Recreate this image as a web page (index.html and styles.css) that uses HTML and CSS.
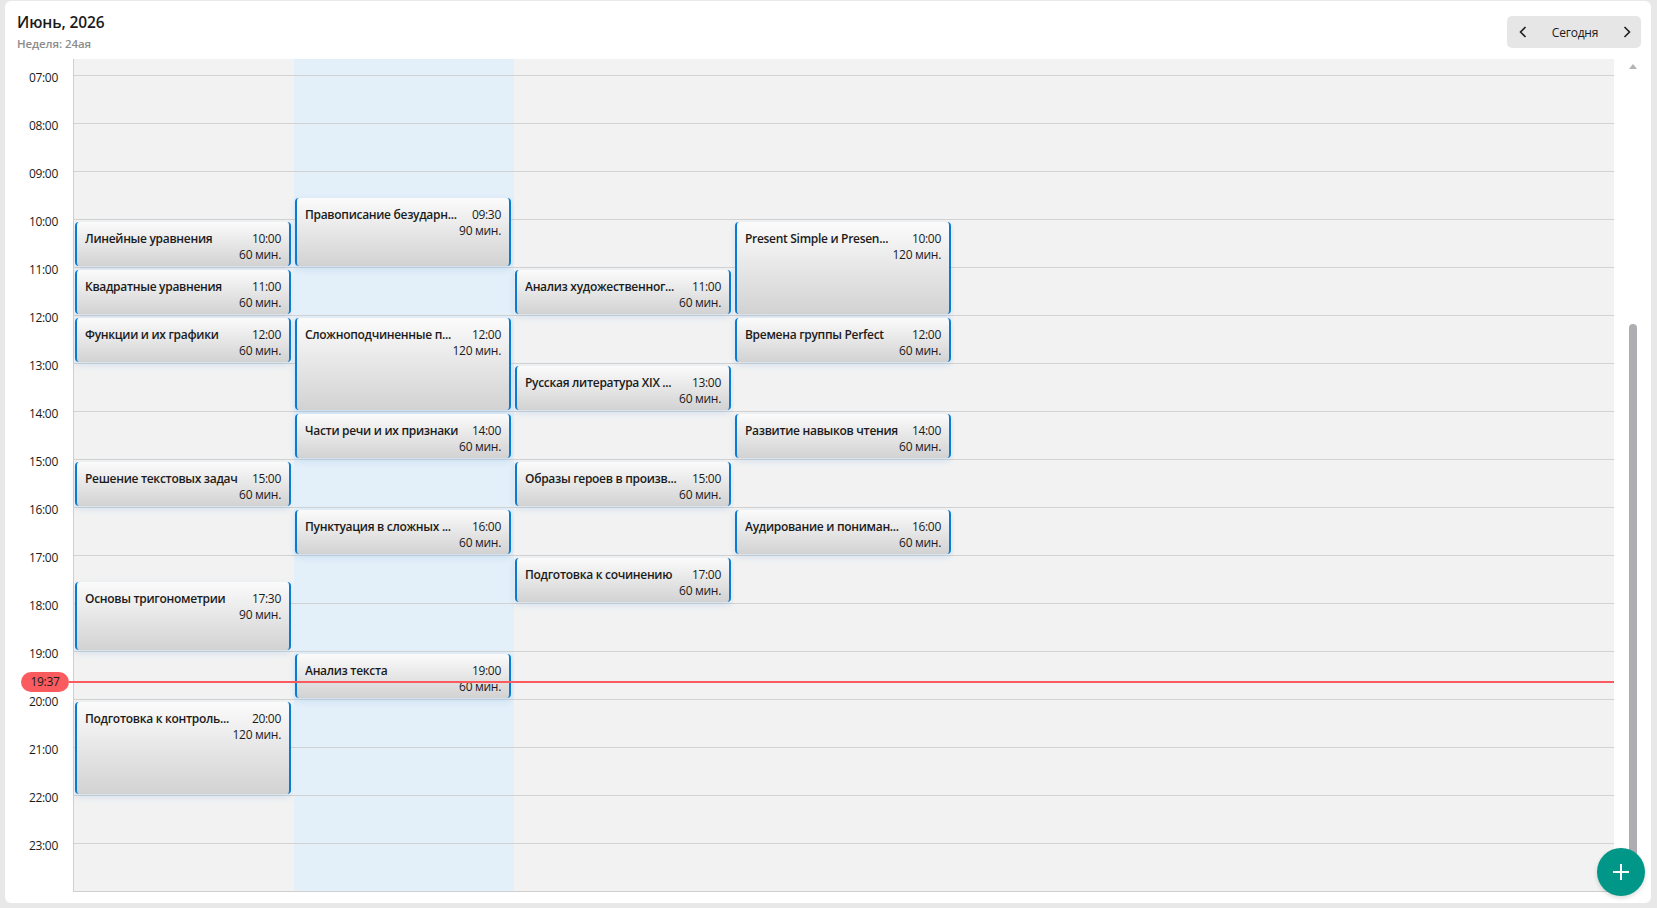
FILE: index.html
```html
<!DOCTYPE html>
<html lang="ru">
<head>
<meta charset="utf-8">
<title>Календарь</title>
<link rel="stylesheet" href="styles.css">
</head>
<body>
<div class="card">
  <header class="header">
    <div class="heading">
      <div class="title">Июнь, 2026</div>
      <div class="subtitle">Неделя: 24ая</div>
    </div>
    <div class="nav">
      <button class="nav-btn" aria-label="Назад"><svg width="10" height="14" viewBox="0 0 10 14"><path d="M7.5 2 L2.5 7 L7.5 12" fill="none" stroke="#1f1f1f" stroke-width="1.6"/></svg></button>
      <span class="nav-label">Сегодня</span>
      <button class="nav-btn" aria-label="Вперёд"><svg width="10" height="14" viewBox="0 0 10 14"><path d="M2.5 2 L7.5 7 L2.5 12" fill="none" stroke="#1f1f1f" stroke-width="1.6"/></svg></button>
    </div>
  </header>

  <div class="body">
    <div class="viewport">
      <div class="content">
        <div class="gutter">
          <div class="hl">07:00</div><div class="hl">08:00</div><div class="hl">09:00</div><div class="hl">10:00</div>
          <div class="hl">11:00</div><div class="hl">12:00</div><div class="hl">13:00</div><div class="hl">14:00</div>
          <div class="hl">15:00</div><div class="hl">16:00</div><div class="hl">17:00</div><div class="hl">18:00</div>
          <div class="hl">19:00</div><div class="hl">20:00</div><div class="hl">21:00</div><div class="hl">22:00</div>
          <div class="hl">23:00</div>
        </div>
        <div class="days">
          <div class="day">
            <div class="event" style="top:482.5px;height:44px"><div class="ev-row"><span class="ev-title">Линейные уравнения</span><span class="ev-time">10:00</span></div><div class="ev-dur">60 мин.</div></div>
            <div class="event" style="top:530.5px;height:44px"><div class="ev-row"><span class="ev-title">Квадратные уравнения</span><span class="ev-time">11:00</span></div><div class="ev-dur">60 мин.</div></div>
            <div class="event" style="top:578.5px;height:44px"><div class="ev-row"><span class="ev-title">Функции и их графики</span><span class="ev-time">12:00</span></div><div class="ev-dur">60 мин.</div></div>
            <div class="event" style="top:722.5px;height:44px"><div class="ev-row"><span class="ev-title">Решение текстовых задач</span><span class="ev-time">15:00</span></div><div class="ev-dur">60 мин.</div></div>
            <div class="event" style="top:842.5px;height:68px"><div class="ev-row"><span class="ev-title">Основы тригонометрии</span><span class="ev-time">17:30</span></div><div class="ev-dur">90 мин.</div></div>
            <div class="event" style="top:962.5px;height:92px"><div class="ev-row"><span class="ev-title">Подготовка к контроль...</span><span class="ev-time">20:00</span></div><div class="ev-dur">120 мин.</div></div>
          </div>
          <div class="day today">
            <div class="event" style="top:458.5px;height:68px"><div class="ev-row"><span class="ev-title">Правописание безударн...</span><span class="ev-time">09:30</span></div><div class="ev-dur">90 мин.</div></div>
            <div class="event" style="top:578.5px;height:92px"><div class="ev-row"><span class="ev-title">Сложноподчиненные п...</span><span class="ev-time">12:00</span></div><div class="ev-dur">120 мин.</div></div>
            <div class="event" style="top:674.5px;height:44px"><div class="ev-row"><span class="ev-title">Части речи и их признаки</span><span class="ev-time">14:00</span></div><div class="ev-dur">60 мин.</div></div>
            <div class="event" style="top:770.5px;height:44px"><div class="ev-row"><span class="ev-title">Пунктуация в сложных ...</span><span class="ev-time">16:00</span></div><div class="ev-dur">60 мин.</div></div>
            <div class="event" style="top:914.5px;height:44px"><div class="ev-row"><span class="ev-title">Анализ текста</span><span class="ev-time">19:00</span></div><div class="ev-dur">60 мин.</div></div>
          </div>
          <div class="day">
            <div class="event" style="top:530.5px;height:44px"><div class="ev-row"><span class="ev-title">Анализ художественног...</span><span class="ev-time">11:00</span></div><div class="ev-dur">60 мин.</div></div>
            <div class="event" style="top:626.5px;height:44px"><div class="ev-row"><span class="ev-title">Русская литература XIX ...</span><span class="ev-time">13:00</span></div><div class="ev-dur">60 мин.</div></div>
            <div class="event" style="top:722.5px;height:44px"><div class="ev-row"><span class="ev-title">Образы героев в произв...</span><span class="ev-time">15:00</span></div><div class="ev-dur">60 мин.</div></div>
            <div class="event" style="top:818.5px;height:44px"><div class="ev-row"><span class="ev-title">Подготовка к сочинению</span><span class="ev-time">17:00</span></div><div class="ev-dur">60 мин.</div></div>
          </div>
          <div class="day">
            <div class="event" style="top:482.5px;height:92px"><div class="ev-row"><span class="ev-title">Present Simple и Presen...</span><span class="ev-time">10:00</span></div><div class="ev-dur">120 мин.</div></div>
            <div class="event" style="top:578.5px;height:44px"><div class="ev-row"><span class="ev-title">Времена группы Perfect</span><span class="ev-time">12:00</span></div><div class="ev-dur">60 мин.</div></div>
            <div class="event" style="top:674.5px;height:44px"><div class="ev-row"><span class="ev-title">Развитие навыков чтения</span><span class="ev-time">14:00</span></div><div class="ev-dur">60 мин.</div></div>
            <div class="event" style="top:770.5px;height:44px"><div class="ev-row"><span class="ev-title">Аудирование и пониман...</span><span class="ev-time">16:00</span></div><div class="ev-dur">60 мин.</div></div>
          </div>
          <div class="day"></div>
          <div class="day"></div>
          <div class="day"></div>
        </div>
        <div class="now" style="top:943px">
          <span class="now-pill">19:37</span>
          <span class="now-line"></span>
        </div>
      </div>
    </div>
    <div class="scrollbar">
      <span class="sb-arrow"></span>
      <span class="sb-thumb"></span>
    </div>
  </div>

  <button class="fab" aria-label="Добавить"><svg width="20" height="20" viewBox="0 0 20 20"><path d="M10 2 V18 M2 10 H18" stroke="#fff" stroke-width="2" fill="none"/></svg></button>
</div>
</body>
</html>
```

FILE: styles.css
```css
* { box-sizing: border-box; }

html, body {
  margin: 0;
  height: 100%;
}

body {
  background: #e8e8e8;
  padding: 1px 6px 5px 5px;
  font-family: "Open Sans", "Noto Sans", sans-serif;
  color: #1b1b1b;
  overflow: hidden;
}

.card {
  position: relative;
  height: 902px;
  background: #ffffff;
  border-radius: 6px;
  display: flex;
  flex-direction: column;
  overflow: hidden;
}

/* Header */
.header {
  height: 58px;
  flex: none;
  display: flex;
  justify-content: space-between;
  align-items: flex-start;
  padding: 0 10px 0 12px;
}

.heading {
  padding-top: 10px;
}

.title {
  font-size: 15.5px;
  line-height: 22px;
  font-weight: 600;
  color: #1a1a1a;
  letter-spacing: -0.1px;
}

.subtitle {
  margin-top: 3px;
  font-size: 11.5px;
  line-height: 16px;
  font-weight: 600;
  color: #8c8c8c;
  letter-spacing: -0.1px;
}

.nav {
  margin-top: 15px;
  width: 134px;
  height: 32px;
  background: #e6e6e6;
  border-radius: 5px;
  display: flex;
  align-items: center;
  justify-content: space-between;
  padding: 0 9px 0 11px;
}

.nav-btn {
  border: 0;
  background: transparent;
  padding: 0;
  width: 10px;
  height: 14px;
  display: flex;
}

.nav-label {
  font-size: 12px;
  line-height: 16px;
  color: #1b1b1b;
  letter-spacing: -0.2px;
  padding-top: 2px;
}

/* Body */
.body {
  flex: none;
  height: 833px;
  display: flex;
}

.viewport {
  flex: 1;
  overflow: hidden;
  position: relative;
}

.content {
  position: relative;
  margin-top: -320px;
  height: 1153px;
  display: flex;
}

.gutter {
  width: 68px;
  flex: none;
  display: flex;
  flex-direction: column;
  padding-top: 331px;
}

.hl {
  height: 48px;
  flex: none;
  text-align: right;
  padding-right: 15px;
  font-size: 12px;
  line-height: 16px;
  color: #1b1b1b;
  letter-spacing: -0.3px;
}

.days {
  flex: 1;
  display: grid;
  grid-template-columns: repeat(7, 1fr);
  border-left: 1px solid #cfcfcf;
  border-bottom: 1px solid #cfcfcf;
}

.day {
  position: relative;
  background-color: #f2f2f2;
  background-image: repeating-linear-gradient(to bottom, #d2d2d2 0, #d2d2d2 1px, transparent 1px, transparent 48px);
}

.day.today {
  background-color: #e3eff9;
}

/* Events */
.event {
  position: absolute;
  left: 1px;
  right: 3px;
  border-left: 2px solid #0a7bd3;
  border-right: 2px solid #0a7bd3;
  border-radius: 4px;
  background: linear-gradient(to bottom, #fbfbfb, #d2d2d2);
  box-shadow: 0 3px 6px rgba(100, 160, 220, 0.22);
  padding: 9px 8px 0 8px;
  font-size: 12px;
  line-height: 16px;
  color: #1b1b1b;
  letter-spacing: -0.3px;
  overflow: hidden;
}

.ev-row {
  display: flex;
  gap: 8px;
}

.ev-title {
  flex: 1;
  min-width: 0;
  font-weight: 600;
  white-space: nowrap;
  overflow: hidden;
  text-overflow: ellipsis;
}

.ev-time {
  flex: none;
}

.ev-dur {
  text-align: right;
}

/* Now indicator */
.now {
  position: absolute;
  left: 16px;
  right: 0;
  height: 20px;
  transform: translateY(-50%);
  display: flex;
  align-items: center;
  pointer-events: none;
}

.now-pill {
  width: 48px;
  height: 20px;
  flex: none;
  border-radius: 10px;
  background: #fb5b5f;
  font-size: 12px;
  line-height: 20px;
  text-align: center;
  color: #1b1b1b;
  letter-spacing: -0.3px;
}

.now-line {
  flex: 1;
  height: 2px;
  background: #fb5b5f;
}

/* Scrollbar */
.scrollbar {
  width: 37px;
  flex: none;
  position: relative;
  display: flex;
  flex-direction: column;
  align-items: flex-start;
  padding: 5px 0 0 15px;
}

.sb-arrow {
  width: 0;
  height: 0;
  border-left: 4.5px solid transparent;
  border-right: 4.5px solid transparent;
  border-bottom: 5px solid #b4b4b8;
}

.sb-thumb {
  margin-top: 255px;
  width: 8px;
  height: 560px;
  border-radius: 4px 4px 0 0;
  background: #adadb2;
}

/* FAB */
.fab {
  position: absolute;
  right: 6px;
  bottom: 7px;
  width: 48px;
  height: 48px;
  border-radius: 50%;
  border: 0;
  background: #009688;
  display: flex;
  align-items: center;
  justify-content: center;
  padding: 0;
  box-shadow: 0 2px 4px rgba(0, 0, 0, 0.15);
}
```
